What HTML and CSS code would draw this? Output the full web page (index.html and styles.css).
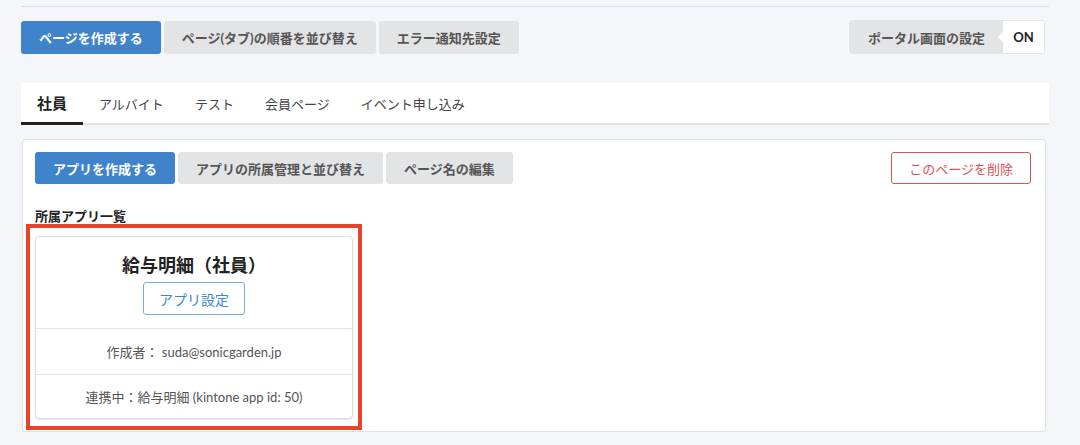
FILE: index.html
```html
<!DOCTYPE html>
<html lang="ja">
<head>
  <meta charset="UTF-8" />
  <title>ポータル設定</title>
  <link rel="stylesheet" href="styles.css">
</head>
<body>
  <div class="wrap">
    <div class="toolbar">
      <div class="btn-group">
        <button class="btn btn-primary">ページを作成する</button>
        <button class="btn btn-gray">ページ(タブ)の順番を並び替え</button>
        <button class="btn btn-gray">エラー通知先設定</button>
      </div>
      <div class="toggle">
        <span class="toggle-label">ポータル画面の設定</span>
        <span class="toggle-state">ON</span>
      </div>
    </div>

    <ul class="tabs">
      <li class="tab active">社員</li>
      <li class="tab">アルバイト</li>
      <li class="tab">テスト</li>
      <li class="tab">会員ページ</li>
      <li class="tab">イベント申し込み</li>
    </ul>

    <div class="panel">
      <div class="panel-actions">
        <div class="btn-group">
          <button class="btn btn-primary">アプリを作成する</button>
          <button class="btn btn-gray">アプリの所属管理と並び替え</button>
          <button class="btn btn-gray">ページ名の編集</button>
        </div>
        <button class="btn btn-danger">このページを削除</button>
      </div>

      <h3 class="section-title">所属アプリ一覧</h3>

      <div class="app-list">
        <div class="app-card">
          <div class="app-head">
            <h2 class="app-name">給与明細（社員）</h2>
            <button class="btn btn-outline">アプリ設定</button>
          </div>
          <div class="app-row">作成者： suda@sonicgarden.jp</div>
          <div class="app-row">連携中：給与明細 (kintone app id: 50)</div>
          <div class="highlight"></div>
        </div>
      </div>
    </div>
  </div>
</body>
</html>
```

FILE: styles.css
```css
body { margin: 0; background-color: #f5f6fa; font-family: Lato, "Noto Sans CJK JP", sans-serif; color: #333; }
.wrap { width: 1028px; margin-left: 21px; }
.toolbar { border-top: 1px solid #dcdde3; margin-top: 6px; padding-top: 13px; display: flex; justify-content: space-between; align-items: center; padding-right: 4px; }
.btn-group { display: flex; gap: 3px; }
.btn { height: 33px; padding: 0 18px; border: none; border-radius: 3px; font-family: inherit; font-size: 13px; font-weight: bold; cursor: pointer; white-space: nowrap; }
.btn-primary { background-color: #3f84cb; color: #fff; }
.btn-gray { background-color: #e3e4e6; color: #555; }
.panel .btn { padding: 0 18px; height: 32px; }
.panel .btn-danger { background-color: #fff; color: #d9534f; border: 1px solid #d9534f; font-weight: normal; padding: 0 17px; }
.panel .btn-outline { background-color: #fff; color: #3f84cb; border: 1px solid #7aa9dc; font-weight: normal; font-size: 14px; padding: 0 15px; height: 33px; }

.toggle { display: flex; height: 32px; border: 1px solid #e3e4e6; border-radius: 3px; overflow: hidden; font-size: 13px; font-weight: bold; white-space: nowrap; }
.toggle-label { background-color: #e3e4e6; color: #555; display: flex; align-items: center; padding: 0 18px; position: relative; }
.toggle-label::after { content: ""; position: absolute; right: 0; top: 11px; border-style: solid; border-width: 5px 5px 5px 0; border-color: transparent #fff transparent transparent; }
.toggle-state { background-color: #fff; color: #222; display: flex; align-items: center; justify-content: center; width: 41px; }

.tabs { list-style: none; margin: 29px 0 0; padding: 0; display: flex; background-color: #fff; height: 40px; border-bottom: 2px solid #e2e3e6; }
.tab { padding: 1px 15px 0 16px; display: flex; align-items: center; font-size: 13px; color: #444; white-space: nowrap; }
.tab.active { font-size: 15px; font-weight: bold; color: #222; border-bottom: 3px solid #222; margin-bottom: -2px; padding: 0 16px; width: 30px; }

.panel { margin-top: 14px; margin-left: 1px; width: 1024px; background-color: #fff; border: 1px solid #e1e2e6; border-radius: 4px; box-shadow: 0 1px 2px rgba(0,0,0,0.08); padding: 12px 14px 12px 12px; box-sizing: border-box; }
.panel-actions { display: flex; justify-content: space-between; }
.section-title { font-size: 13px; font-weight: bold; margin: 23px 0 11px; color: #222; line-height: 18px; }

.app-list { display: flex; }
.app-card { position: relative; width: 318px; border: 1px solid #dcdde0; border-radius: 4px; box-shadow: 0 1px 2px rgba(0,0,0,0.1); background-color: #fff; box-sizing: border-box; }
.app-head { display: flex; flex-direction: column; align-items: center; padding: 16px 0 13px; border-bottom: 1px solid #e4e5e8; }
.app-name { font-size: 18px; font-weight: bold; margin: 0 0 5px; line-height: 24px; color: #222; }
.app-row { height: 45px; display: flex; align-items: center; justify-content: center; font-size: 13px; color: #555; }
.app-row + .app-row { border-top: 1px solid #e4e5e8; height: 43px; }

.highlight { position: absolute; left: -10px; top: -13px; right: -10px; bottom: -12px; border: 4px solid #e8442c; }
```
